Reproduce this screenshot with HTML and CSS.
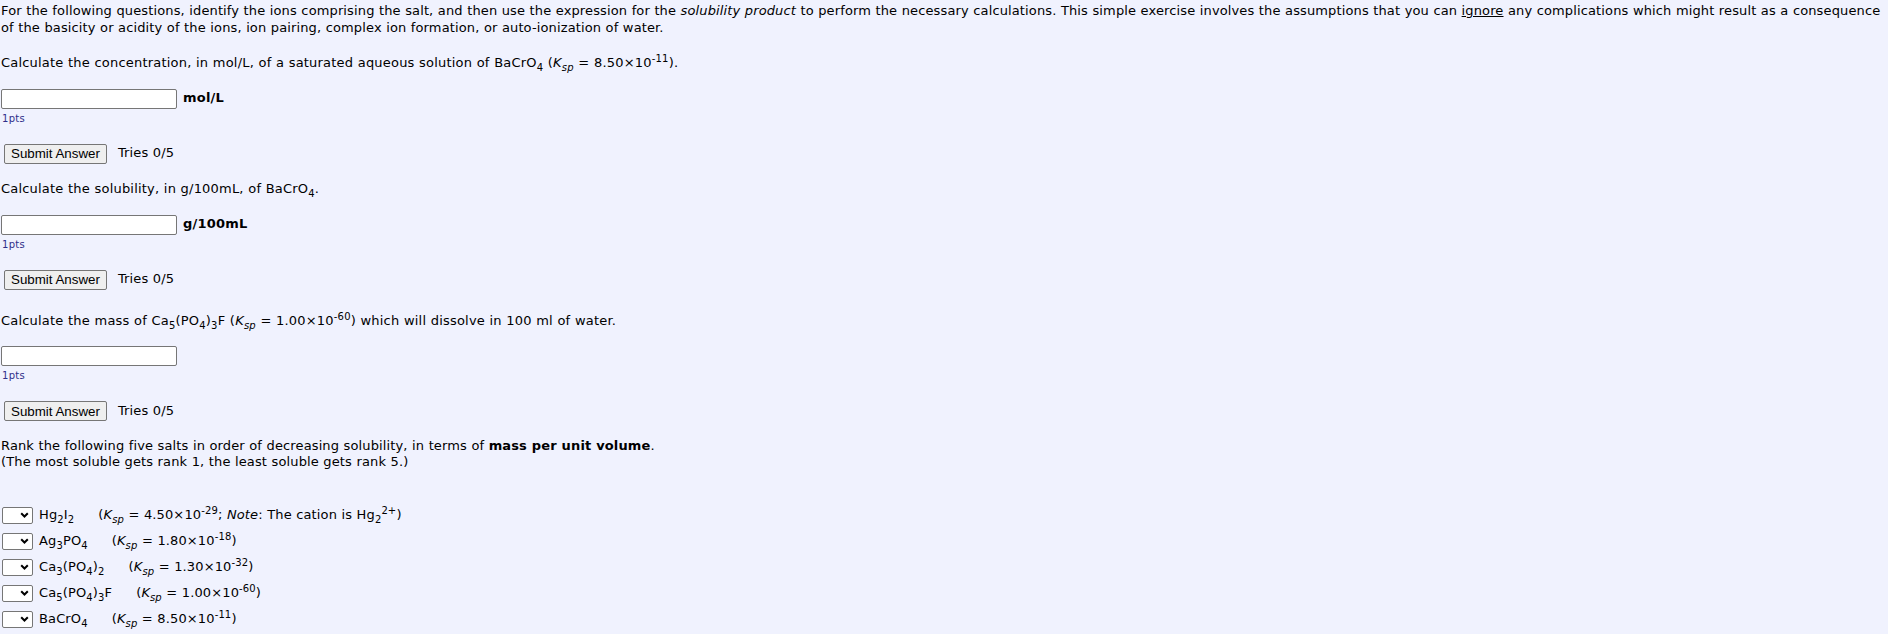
FILE: index.html
```html
<!DOCTYPE html>
<html>
<head>
<meta charset="utf-8">
<title>Solubility Product</title>
<link rel="stylesheet" href="styles.css">
</head>
<body>
<div class="qcontent">
  <p class="intro">For the following questions, identify the ions comprising the salt, and then use the expression for the <i>solubility product</i> to perform the necessary calculations. This simple exercise involves the assumptions that you can <u>ignore</u> any complications which might result as a consequence<br>of the basicity or acidity of the ions, ion pairing, complex ion formation, or auto-ionization of water.</p>

  <p class="prompt first">Calculate the concentration, in mol/L, of a saturated aqueous solution of BaCrO<sub>4</sub> (<i>K<sub>sp</sub></i> = 8.50×10<sup>-11</sup>).</p>
  <div class="answer"><input class="field" type="text"><b class="unit">mol/L</b></div>
  <div class="pts">1pts</div>
  <div class="submit"><button class="btn" type="button">Submit Answer</button><span class="tries">Tries 0/5</span></div>

  <p class="prompt second">Calculate the solubility, in g/100mL, of BaCrO<sub>4</sub>.</p>
  <div class="answer"><input class="field" type="text"><b class="unit">g/100mL</b></div>
  <div class="pts">1pts</div>
  <div class="submit"><button class="btn" type="button">Submit Answer</button><span class="tries">Tries 0/5</span></div>

  <p class="prompt third">Calculate the mass of Ca<sub>5</sub>(PO<sub>4</sub>)<sub>3</sub>F (<i>K<sub>sp</sub></i> = 1.00×10<sup>-60</sup>) which will dissolve in 100 ml of water.</p>
  <div class="answer third-answer"><input class="field" type="text"></div>
  <div class="pts">1pts</div>
  <div class="submit"><button class="btn" type="button">Submit Answer</button><span class="tries">Tries 0/5</span></div>

  <p class="prompt rank">Rank the following five salts in order of decreasing solubility, in terms of <b>mass per unit volume</b>.<br>(The most soluble gets rank 1, the least soluble gets rank 5.)</p>

  <div class="ranks">
    <div class="rrow"><span class="pickwrap"><select class="pick"><option></option><option>1</option><option>2</option><option>3</option><option>4</option><option>5</option></select><svg class="chev" width="9" height="6" viewBox="0 0 9 6"><path d="M1.2 1.2 L4.5 4.5 L7.8 1.2" fill="none" stroke="#000" stroke-width="2"/></svg></span><span class="salt">Hg<sub>2</sub>I<sub>2</sub></span><span class="ksp">(<i>K<sub>sp</sub></i> = 4.50×10<sup>-29</sup>; <i>Note</i>: The cation is Hg<sub>2</sub><sup>2+</sup>)</span></div>
    <div class="rrow"><span class="pickwrap"><select class="pick"><option></option><option>1</option><option>2</option><option>3</option><option>4</option><option>5</option></select><svg class="chev" width="9" height="6" viewBox="0 0 9 6"><path d="M1.2 1.2 L4.5 4.5 L7.8 1.2" fill="none" stroke="#000" stroke-width="2"/></svg></span><span class="salt">Ag<sub>3</sub>PO<sub>4</sub></span><span class="ksp">(<i>K<sub>sp</sub></i> = 1.80×10<sup>-18</sup>)</span></div>
    <div class="rrow"><span class="pickwrap"><select class="pick"><option></option><option>1</option><option>2</option><option>3</option><option>4</option><option>5</option></select><svg class="chev" width="9" height="6" viewBox="0 0 9 6"><path d="M1.2 1.2 L4.5 4.5 L7.8 1.2" fill="none" stroke="#000" stroke-width="2"/></svg></span><span class="salt">Ca<sub>3</sub>(PO<sub>4</sub>)<sub>2</sub></span><span class="ksp">(<i>K<sub>sp</sub></i> = 1.30×10<sup>-32</sup>)</span></div>
    <div class="rrow"><span class="pickwrap"><select class="pick"><option></option><option>1</option><option>2</option><option>3</option><option>4</option><option>5</option></select><svg class="chev" width="9" height="6" viewBox="0 0 9 6"><path d="M1.2 1.2 L4.5 4.5 L7.8 1.2" fill="none" stroke="#000" stroke-width="2"/></svg></span><span class="salt">Ca<sub>5</sub>(PO<sub>4</sub>)<sub>3</sub>F</span><span class="ksp">(<i>K<sub>sp</sub></i> = 1.00×10<sup>-60</sup>)</span></div>
    <div class="rrow"><span class="pickwrap"><select class="pick"><option></option><option>1</option><option>2</option><option>3</option><option>4</option><option>5</option></select><svg class="chev" width="9" height="6" viewBox="0 0 9 6"><path d="M1.2 1.2 L4.5 4.5 L7.8 1.2" fill="none" stroke="#000" stroke-width="2"/></svg></span><span class="salt">BaCrO<sub>4</sub></span><span class="ksp">(<i>K<sub>sp</sub></i> = 8.50×10<sup>-11</sup>)</span></div>
  </div>
</div>
</body>
</html>
```

FILE: styles.css
```css
html, body {
  margin: 0;
  padding: 0;
  background: #f0f2fe;
}

body {
  padding: 3px 0 0 1px;
  font-family: "DejaVu Sans", Verdana, sans-serif;
  font-size: 13px;
  line-height: 16.5px;
  color: #000;
  letter-spacing: 0.13px;
  word-spacing: 0.2px;
}

.qcontent p {
  margin: 0;
}

.intro {
  white-space: nowrap;
}

.prompt {
  letter-spacing: 0.2px;
}

sub, sup {
  font-size: 10px;
  line-height: 0;
}

.prompt.first {
  margin-top: 18.5px;
}

.prompt.second {
  margin-top: 17px;
}

.prompt.third {
  margin-top: 23px;
}

.prompt.rank {
  margin-top: 16.5px;
  letter-spacing: 0.13px;
}

.answer {
  display: flex;
  align-items: center;
  gap: 6px;
  margin-top: 17.5px;
  height: 20px;
}

.third-answer {
  margin-top: 17px;
}

.field {
  box-sizing: border-box;
  width: 176px;
  height: 20px;
  margin: 0;
  padding: 1px 2px;
  border: 1px solid #767676;
  border-radius: 2px;
  background: #fff;
}

.unit {
  font-weight: bold;
  letter-spacing: 0.2px;
}

.pts {
  margin-top: 4px;
  font-size: 10px;
  line-height: 12px;
  color: #2e2e8a;
  padding-left: 1px;
  letter-spacing: 0.3px;
}

.submit {
  display: flex;
  align-items: center;
  gap: 11px;
  margin-top: 19px;
  height: 20px;
  padding-left: 3px;
}

.btn {
  box-sizing: border-box;
  height: 20px;
  margin: 0;
  padding: 1px 6px;
  font-family: "Liberation Sans", Arial, sans-serif;
  font-size: 13.33px;
  letter-spacing: 0;
  word-spacing: 0;
  color: #000;
  background: #efefef;
  border: 1px solid #767676;
  border-radius: 2px;
}

.ranks {
  margin-top: 31.5px;
}

.rrow {
  display: flex;
  align-items: center;
  height: 26px;
}

.pickwrap {
  position: relative;
  display: flex;
  margin: 0 6px 0 1px;
}

.pick {
  box-sizing: border-box;
  width: 31px;
  height: 17px;
  margin: 0;
  padding: 0;
  font-size: 11px;
  background: #fff;
  border: 1px solid #767676;
  border-radius: 2px;
  color: #000;
  appearance: none;
  -webkit-appearance: none;
}

.chev {
  position: absolute;
  left: 17.5px;
  top: 5.5px;
  pointer-events: none;
}

.ksp {
  margin-left: 24px;
}
```
